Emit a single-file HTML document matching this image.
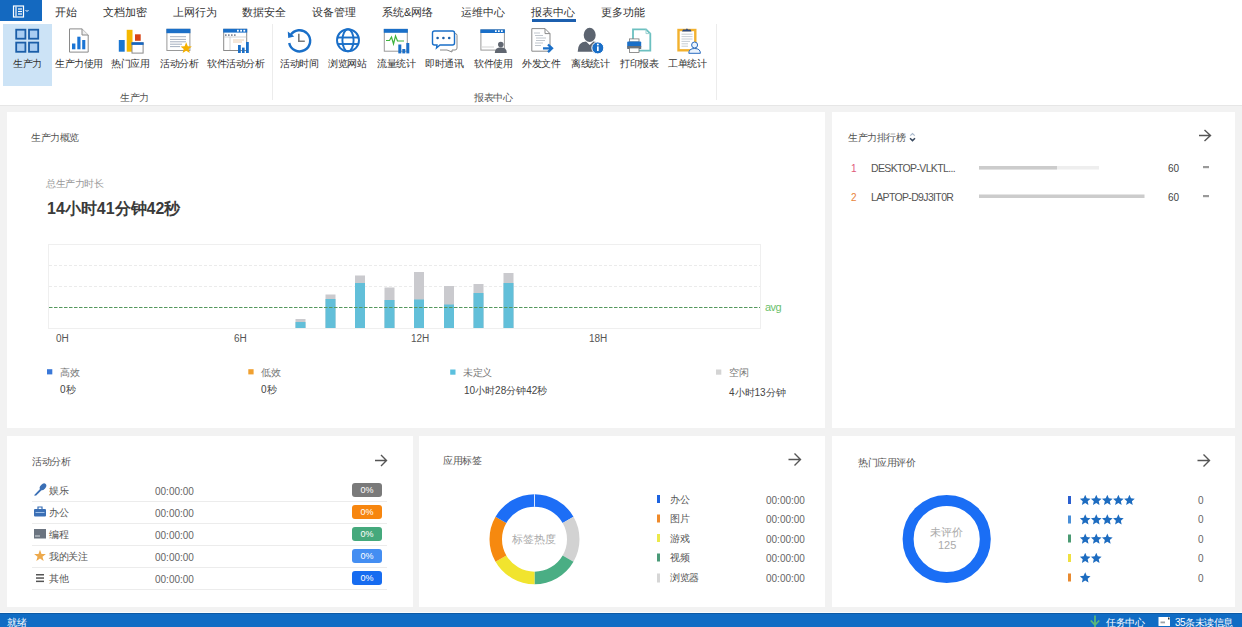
<!DOCTYPE html>
<html><head><meta charset="utf-8">
<style>
*{margin:0;padding:0;box-sizing:border-box}
html,body{width:1242px;height:627px;overflow:hidden;background:#f2f2f2;font-family:"Liberation Sans",sans-serif;color:#333}
.t{position:absolute;white-space:nowrap;line-height:1}
.f10{font-size:10px;letter-spacing:-0.5px}
.rl{font-size:10px;letter-spacing:-0.4px}
.n{font-size:10px}
.f11{font-size:11px}
svg{position:absolute;left:0;top:0}
</style></head><body>
<!-- ribbon bg -->
<div class="t" style="left:0;top:0;width:1242px;height:105px;background:#fff"></div>
<div class="t" style="left:0;top:105px;width:1242px;height:1px;background:#e6e6e6"></div>
<div class="t" style="left:0;top:0;width:42px;height:21px;background:#1469c0"></div>
<div class="t" style="left:3px;top:24px;width:49px;height:62px;background:#cce3f6"></div>
<div class="t" style="left:272px;top:24px;width:1px;height:76px;background:#ececec"></div>
<div class="t" style="left:716px;top:24px;width:1px;height:76px;background:#ececec"></div>
<div class="t" style="left:532px;top:19.3px;width:44px;height:2.6px;background:#1c5fae"></div>

<!-- tabs -->
<div class="t f11" style="left:55px;top:7px">开始</div>
<div class="t f11" style="left:103px;top:7px">文档加密</div>
<div class="t f11" style="left:173px;top:7px">上网行为</div>
<div class="t f11" style="left:242px;top:7px">数据安全</div>
<div class="t f11" style="left:312px;top:7px">设备管理</div>
<div class="t f11" style="left:382px;top:7px">系统&amp;网络</div>
<div class="t f11" style="left:461px;top:7px">运维中心</div>
<div class="t f11" style="left:531px;top:7px">报表中心</div>
<div class="t f11" style="left:601px;top:7px">更多功能</div>

<!-- ribbon labels -->
<div class="t rl" style="left:13px;top:59px">生产力</div>
<div class="t rl" style="left:55px;top:59px">生产力使用</div>
<div class="t rl" style="left:111px;top:59px">热门应用</div>
<div class="t rl" style="left:160px;top:59px">活动分析</div>
<div class="t rl" style="left:207px;top:59px">软件活动分析</div>
<div class="t rl" style="left:280px;top:59px">活动时间</div>
<div class="t rl" style="left:328px;top:59px">浏览网站</div>
<div class="t rl" style="left:377px;top:59px">流量统计</div>
<div class="t rl" style="left:425px;top:59px">即时通讯</div>
<div class="t rl" style="left:474px;top:59px">软件使用</div>
<div class="t rl" style="left:522px;top:59px">外发文件</div>
<div class="t rl" style="left:571px;top:59px">离线统计</div>
<div class="t rl" style="left:620px;top:59px">打印报表</div>
<div class="t rl" style="left:668px;top:59px">工单统计</div>
<div class="t f10" style="left:120px;top:93px;color:#555">生产力</div>
<div class="t f10" style="left:474px;top:93px;color:#555">报表中心</div>

<!-- panels -->
<div class="t" style="left:7px;top:112px;width:818px;height:316px;background:#fff"></div>
<div class="t" style="left:832px;top:112px;width:403px;height:316px;background:#fff"></div>
<div class="t" style="left:7px;top:436px;width:406px;height:171px;background:#fff"></div>
<div class="t" style="left:419px;top:436px;width:406px;height:171px;background:#fff"></div>
<div class="t" style="left:832px;top:436px;width:403px;height:171px;background:#fff"></div>

<!-- status -->
<div class="t" style="left:0;top:612px;width:1242px;height:1px;background:#fafcfe"></div>
<div class="t" style="left:0;top:613px;width:1242px;height:14px;background:#106cc4;border-top:1px solid #0d5aa5"></div>

<!-- main panel -->
<div class="t f10" style="left:31px;top:133px;color:#555">生产力概览</div>
<div class="t f10" style="left:46px;top:179px;color:#999">总生产力时长</div>
<div class="t" style="left:47px;top:201px;font-size:16px;font-weight:bold;color:#3a3a3a">14小时41分钟42秒</div>
<svg width="1242" height="627" style="left:0;top:0">
  <rect x="48.5" y="244.5" width="712" height="84" fill="none" stroke="#efefef" stroke-width="1"/>
  <line x1="49" y1="265.5" x2="760" y2="265.5" stroke="#ebebeb" stroke-dasharray="3,2"/>
  <line x1="49" y1="286.5" x2="760" y2="286.5" stroke="#ebebeb" stroke-dasharray="3,2"/>
  <g fill="#cacace">
    <rect x="295.5" y="319" width="10" height="9"/>
    <rect x="325.5" y="294.5" width="10" height="33.5"/>
    <rect x="355" y="275.5" width="10" height="52.5"/>
    <rect x="384.5" y="287.5" width="10" height="40.5"/>
    <rect x="414" y="272" width="10" height="56"/>
    <rect x="444" y="286" width="10" height="42"/>
    <rect x="473.5" y="284" width="10" height="44"/>
    <rect x="503.5" y="273" width="10" height="55"/>
  </g>
  <g fill="#62bfd9">
    <rect x="295.5" y="322" width="10" height="6"/>
    <rect x="325.5" y="299" width="10" height="29"/>
    <rect x="355" y="283" width="10" height="45"/>
    <rect x="384.5" y="300" width="10" height="28"/>
    <rect x="414" y="299.5" width="10" height="28.5"/>
    <rect x="444" y="304.5" width="10" height="23.5"/>
    <rect x="473.5" y="293" width="10" height="35"/>
    <rect x="503.5" y="283" width="10" height="45"/>
  </g>
  <line x1="49" y1="307.5" x2="760" y2="307.5" stroke="#55985e" stroke-width="1" stroke-dasharray="3.5,1.5"/>
  <g fill="#3a78d8"><rect x="47" y="369.2" width="5.3" height="5.2"/></g>
  <g fill="#f0a030"><rect x="248.3" y="369.2" width="5.3" height="5.2"/></g>
  <g fill="#5bc0de"><rect x="450.2" y="369.5" width="5.3" height="5.2"/></g>
  <g fill="#d4d4d4"><rect x="716" y="369.5" width="5.3" height="5.2"/></g>
</svg>
<div class="t f10" style="left:765px;top:302px;color:#6cbf6c;font-size:11px">avg</div>
<div class="t n" style="left:56px;top:334px;color:#555">0H</div>
<div class="t n" style="left:234px;top:334px;color:#555">6H</div>
<div class="t n" style="left:411px;top:334px;color:#555">12H</div>
<div class="t n" style="left:589px;top:334px;color:#555">18H</div>
<div class="t f10" style="left:60px;top:368px;color:#777">高效</div>
<div class="t f10" style="left:261px;top:368px;color:#777">低效</div>
<div class="t f10" style="left:463px;top:368px;color:#777">未定义</div>
<div class="t f10" style="left:729px;top:368px;color:#777">空闲</div>
<div class="t n" style="left:60px;top:385px;color:#444">0秒</div>
<div class="t n" style="left:261px;top:385px;color:#444">0秒</div>
<div class="t n" style="left:464px;top:386px;color:#444">10小时28分钟42秒</div>
<div class="t n" style="left:729px;top:388px;color:#444">4小时13分钟</div>

<!-- ranking -->
<div class="t f10" style="left:848px;top:133px;color:#555">生产力排行榜</div>
<div class="t" style="left:851px;top:164px;font-size:10px;color:#e05a7a">1</div>
<div class="t" style="left:851px;top:193px;font-size:10px;color:#e8843a">2</div>
<div class="t" style="left:871px;top:163px;font-size:10.5px;letter-spacing:-0.65px;color:#555">DESKTOP-VLKTL...</div>
<div class="t" style="left:871px;top:192px;font-size:10.5px;letter-spacing:-0.65px;color:#555">LAPTOP-D9J3IT0R</div>
<div class="t n" style="left:1168px;top:164px;color:#444">60</div>
<div class="t n" style="left:1168px;top:193px;color:#444">60</div>
<svg width="1242" height="627">
  <path d="M910.3 135.6 L912.5 133.6 L914.7 135.6" fill="none" stroke="#a8b8cc" stroke-width="1.1"/><path d="M910 138.2 L912.5 140.6 L915 138.2" fill="none" stroke="#3a4a60" stroke-width="1.5"/>
  <rect x="979" y="166" width="120" height="3.5" fill="#eeeeee"/>
  <rect x="979" y="166" width="78" height="3.5" fill="#cccccc"/>
  <rect x="979" y="194.5" width="165.5" height="3.5" fill="#cccccc"/>
  <rect x="1203" y="166" width="6" height="2.2" fill="#999"/>
  <rect x="1203" y="195" width="6" height="2.2" fill="#999"/>
  <g fill="none" stroke="#555" stroke-width="1.4">
    <path d="M1199 135.5 H1210.5 M1204.5 130 L1210.5 135.5 L1204.5 141"/>
    <path d="M375 460.5 H386.5 M381 455 L386.5 460.5 L381 466"/>
    <path d="M788.5 459.5 H800.5 M794.5 453.5 L800.5 459.5 L794.5 465.5"/>
    <path d="M1197.5 460.5 H1209.5 M1203.5 454.5 L1209.5 460.5 L1203.5 466.5"/>
  </g>
</svg>


<!-- activity -->
<div class="t f10" style="left:32px;top:457px;color:#555">活动分析</div>
<div class="t f10" style="left:49px;top:486px;color:#555">娱乐</div>
<div class="t f10" style="left:49px;top:508px;color:#555">办公</div>
<div class="t f10" style="left:49px;top:530px;color:#555">编程</div>
<div class="t f10" style="left:49px;top:552px;color:#555">我的关注</div>
<div class="t f10" style="left:49px;top:574px;color:#555">其他</div>
<div class="t n" style="left:155px;top:487px;color:#666">00:00:00</div>
<div class="t n" style="left:155px;top:509px;color:#666">00:00:00</div>
<div class="t n" style="left:155px;top:531px;color:#666">00:00:00</div>
<div class="t n" style="left:155px;top:553px;color:#666">00:00:00</div>
<div class="t n" style="left:155px;top:575px;color:#666">00:00:00</div>
<div class="t" style="left:352px;top:483px;width:30px;height:14px;border-radius:3px;background:#7a7a7a"></div>
<div class="t" style="left:352px;top:505px;width:30px;height:14px;border-radius:3px;background:#f7860f"></div>
<div class="t" style="left:352px;top:527px;width:30px;height:14px;border-radius:3px;background:#45a97c"></div>
<div class="t" style="left:352px;top:549px;width:30px;height:14px;border-radius:3px;background:#448ef2"></div>
<div class="t" style="left:352px;top:571px;width:30px;height:14px;border-radius:3px;background:#176cf0"></div>
<div class="t" style="left:352px;top:486px;width:30px;font-size:9px;color:#fff;text-align:center">0%</div>
<div class="t" style="left:352px;top:508px;width:30px;font-size:9px;color:#fff;text-align:center">0%</div>
<div class="t" style="left:352px;top:530px;width:30px;font-size:9px;color:#fff;text-align:center">0%</div>
<div class="t" style="left:352px;top:552px;width:30px;font-size:9px;color:#fff;text-align:center">0%</div>
<div class="t" style="left:352px;top:574px;width:30px;font-size:9px;color:#fff;text-align:center">0%</div>
<svg width="1242" height="627">
  <g fill="#ececec">
    <rect x="32" y="501" width="355" height="1"/>
    <rect x="32" y="523" width="355" height="1"/>
    <rect x="32" y="545" width="355" height="1"/>
    <rect x="32" y="567" width="355" height="1"/>
    <rect x="32" y="589" width="355" height="1"/>
  </g>
  <path d="M34.2 495.8 L35 494.2 L40.5 488.6 L41.8 489.9 L36.2 495.4 Z" fill="#3a6fb5"/>
  <ellipse cx="43" cy="486.8" rx="2.6" ry="3.8" transform="rotate(45 43 486.8)" fill="#3a6fb5"/>
  <rect x="34" y="509" width="12" height="7.5" rx="1" fill="#3a6fb5"/>
  <path d="M38 509 V507 H42 V509" fill="none" stroke="#3a6fb5" stroke-width="1.2"/>
  <rect x="35.5" y="512" width="9" height="1" fill="#9fc0e8"/>
  <rect x="34" y="529" width="12" height="9.5" fill="#6b7480"/>
  <rect x="35" y="535" width="5" height="2" fill="#a0a8b0"/>
  <path d="M40.00,549.80 L41.53,553.89 L45.90,554.08 L42.48,556.80 L43.64,561.02 L40.00,558.60 L36.36,561.02 L37.52,556.80 L34.10,554.08 L38.47,553.89Z" fill="#eda94c"/>
  <g fill="#555"><rect x="36" y="574" width="8" height="1.5"/><rect x="36" y="577.3" width="8" height="1.5"/><rect x="36" y="580.6" width="8" height="1.5"/></g>
</svg>

<!-- app tags -->
<div class="t f10" style="left:443px;top:456px;color:#555">应用标签</div>
<svg width="1242" height="627">
<path d="M534.50 494.20 A45 45 0 0 1 573.47 516.70 L562.65 522.95 A32.5 32.5 0 0 0 534.50 506.70Z" fill="#1d6ef6"/>
<path d="M573.47 516.70 A45 45 0 0 1 573.47 561.70 L562.65 555.45 A32.5 32.5 0 0 0 562.65 522.95Z" fill="#d2d2d2"/>
<path d="M573.47 561.70 A45 45 0 0 1 534.50 584.20 L534.50 571.70 A32.5 32.5 0 0 0 562.65 555.45Z" fill="#4aae84"/>
<path d="M534.50 584.20 A45 45 0 0 1 495.53 561.70 L506.35 555.45 A32.5 32.5 0 0 0 534.50 571.70Z" fill="#f1e42e"/>
<path d="M495.53 561.70 A45 45 0 0 1 495.53 516.70 L506.35 522.95 A32.5 32.5 0 0 0 506.35 555.45Z" fill="#f6890f"/>
<path d="M495.53 516.70 A45 45 0 0 1 534.50 494.20 L534.50 506.70 A32.5 32.5 0 0 0 506.35 522.95Z" fill="#1d6ef6"/>
<line x1="534.5" y1="494.20000000000005" x2="534.5" y2="506.70000000000005" stroke="#fff" stroke-width="0.8"/>
  <g>
    <rect x="657" y="495" width="3" height="8" fill="#1d63e0"/>
    <rect x="657" y="514.5" width="3" height="8" fill="#ef8a2a"/>
    <rect x="657" y="534" width="3" height="8" fill="#ece94a"/>
    <rect x="657" y="553.5" width="3" height="8" fill="#4a9a78"/>
    <rect x="657" y="573.5" width="3" height="9" fill="#d6d6d6"/>
  </g>
</svg>
<div class="t" style="left:512px;top:534px;font-size:11px;color:#aaa">标签热度</div>
<div class="t f10" style="left:670px;top:495px;color:#555">办公</div>
<div class="t f10" style="left:670px;top:514px;color:#555">图片</div>
<div class="t f10" style="left:670px;top:534px;color:#555">游戏</div>
<div class="t f10" style="left:670px;top:553px;color:#555">视频</div>
<div class="t f10" style="left:670px;top:573px;color:#555">浏览器</div>
<div class="t n" style="left:766px;top:496px;color:#666">00:00:00</div>
<div class="t n" style="left:766px;top:515px;color:#666">00:00:00</div>
<div class="t n" style="left:766px;top:535px;color:#666">00:00:00</div>
<div class="t n" style="left:766px;top:554px;color:#666">00:00:00</div>
<div class="t n" style="left:766px;top:574px;color:#666">00:00:00</div>

<!-- rating -->
<div class="t f10" style="left:858px;top:458px;color:#555">热门应用评价</div>
<svg width="1242" height="627">
  <circle cx="946.7" cy="539" r="38.6" fill="none" stroke="#1a6ef5" stroke-width="11"/>
  <rect x="1068" y="496" width="3" height="8" fill="#2a5fd0"/>
  <rect x="1068" y="515.5" width="3" height="8" fill="#4a8fd8"/>
  <rect x="1068" y="534.5" width="3" height="8" fill="#4a9a72"/>
  <rect x="1068" y="554" width="3" height="8" fill="#f0e040"/>
  <rect x="1068" y="573.5" width="3" height="8" fill="#e88a30"/>
<path d="M1085.20,494.80 L1086.73,498.30 L1090.53,498.67 L1087.67,501.20 L1088.49,504.93 L1085.20,503.00 L1081.91,504.93 L1082.73,501.20 L1079.87,498.67 L1083.67,498.30Z M1096.26,494.80 L1097.79,498.30 L1101.59,498.67 L1098.73,501.20 L1099.55,504.93 L1096.26,503.00 L1092.97,504.93 L1093.79,501.20 L1090.93,498.67 L1094.73,498.30Z M1107.32,494.80 L1108.85,498.30 L1112.65,498.67 L1109.79,501.20 L1110.61,504.93 L1107.32,503.00 L1104.03,504.93 L1104.85,501.20 L1101.99,498.67 L1105.79,498.30Z M1118.38,494.80 L1119.91,498.30 L1123.71,498.67 L1120.85,501.20 L1121.67,504.93 L1118.38,503.00 L1115.09,504.93 L1115.91,501.20 L1113.05,498.67 L1116.85,498.30Z M1129.44,494.80 L1130.97,498.30 L1134.77,498.67 L1131.91,501.20 L1132.73,504.93 L1129.44,503.00 L1126.15,504.93 L1126.97,501.20 L1124.11,498.67 L1127.91,498.30Z M1085.20,514.30 L1086.73,517.80 L1090.53,518.17 L1087.67,520.70 L1088.49,524.43 L1085.20,522.50 L1081.91,524.43 L1082.73,520.70 L1079.87,518.17 L1083.67,517.80Z M1096.26,514.30 L1097.79,517.80 L1101.59,518.17 L1098.73,520.70 L1099.55,524.43 L1096.26,522.50 L1092.97,524.43 L1093.79,520.70 L1090.93,518.17 L1094.73,517.80Z M1107.32,514.30 L1108.85,517.80 L1112.65,518.17 L1109.79,520.70 L1110.61,524.43 L1107.32,522.50 L1104.03,524.43 L1104.85,520.70 L1101.99,518.17 L1105.79,517.80Z M1118.38,514.30 L1119.91,517.80 L1123.71,518.17 L1120.85,520.70 L1121.67,524.43 L1118.38,522.50 L1115.09,524.43 L1115.91,520.70 L1113.05,518.17 L1116.85,517.80Z M1085.20,533.60 L1086.73,537.10 L1090.53,537.47 L1087.67,540.00 L1088.49,543.73 L1085.20,541.80 L1081.91,543.73 L1082.73,540.00 L1079.87,537.47 L1083.67,537.10Z M1096.26,533.60 L1097.79,537.10 L1101.59,537.47 L1098.73,540.00 L1099.55,543.73 L1096.26,541.80 L1092.97,543.73 L1093.79,540.00 L1090.93,537.47 L1094.73,537.10Z M1107.32,533.60 L1108.85,537.10 L1112.65,537.47 L1109.79,540.00 L1110.61,543.73 L1107.32,541.80 L1104.03,543.73 L1104.85,540.00 L1101.99,537.47 L1105.79,537.10Z M1085.20,552.80 L1086.73,556.30 L1090.53,556.67 L1087.67,559.20 L1088.49,562.93 L1085.20,561.00 L1081.91,562.93 L1082.73,559.20 L1079.87,556.67 L1083.67,556.30Z M1096.26,552.80 L1097.79,556.30 L1101.59,556.67 L1098.73,559.20 L1099.55,562.93 L1096.26,561.00 L1092.97,562.93 L1093.79,559.20 L1090.93,556.67 L1094.73,556.30Z M1085.20,572.30 L1086.73,575.80 L1090.53,576.17 L1087.67,578.70 L1088.49,582.43 L1085.20,580.50 L1081.91,582.43 L1082.73,578.70 L1079.87,576.17 L1083.67,575.80Z" fill="#1d6cc0"/>
</svg>
<div class="t" style="left:930px;top:527px;font-size:11px;color:#aaa">未评价</div>
<div class="t" style="left:938px;top:540px;font-size:11px;color:#aaa">125</div>
<div class="t n" style="left:1198px;top:496px;color:#666">0</div>
<div class="t n" style="left:1198px;top:515px;color:#666">0</div>
<div class="t n" style="left:1198px;top:535px;color:#666">0</div>
<div class="t n" style="left:1198px;top:554px;color:#666">0</div>
<div class="t n" style="left:1198px;top:574px;color:#666">0</div>

<!-- status text -->
<div class="t f10" style="left:7px;top:618px;color:#fff">就绪</div>
<div class="t f10" style="left:1106px;top:618px;color:#fff">任务中心</div>
<div class="t f10" style="left:1175px;top:618px;color:#fff">35条未读信息</div>
<svg width="1242" height="627">
  <path d="M1095 615.5 V627 M1090.8 620.5 L1095 625 L1099.2 620.5" fill="none" stroke="#5ab878" stroke-width="1.8"/>
  <rect x="1158.5" y="617" width="11.5" height="9" fill="#fff"/>
  <rect x="1160.5" y="621.5" width="4.5" height="1.8" fill="#a0a4a8"/><rect x="1168" y="617.5" width="1.5" height="2" fill="#333"/>
</svg>


<!-- ribbon icons -->
<svg width="1242" height="104">
  <!-- file button icon -->
  <g fill="none" stroke="#fff" stroke-width="1.2">
    <rect x="13.5" y="6" width="10" height="11"/>
    <line x1="16" y1="6.5" x2="16" y2="16.5"/>
    <line x1="18" y1="9" x2="22" y2="9"/><line x1="18" y1="11.5" x2="22" y2="11.5"/><line x1="18" y1="14" x2="22" y2="14"/>
    <path d="M25.5 10 L27 11.5 L28.5 10" stroke-width="1"/>
  </g>
  <!-- 1 grid -->
  <g fill="#a9cdf2" stroke="#1b5ea8" stroke-width="1.8">
    <rect x="16.2" y="29.7" width="9.2" height="9"/>
    <rect x="29" y="29.7" width="9.2" height="9"/>
    <rect x="16.2" y="42.6" width="9.2" height="9.2"/>
    <rect x="29" y="42.6" width="9.2" height="9.2"/>
  </g>
  <!-- 2 doc chart -->
  <path d="M69.5 28.9 H82 L88.2 35 V52.1 H69.5 Z" fill="#fff" stroke="#8a8a8a" stroke-width="1"/>
  <path d="M82 28.9 V35 H88.2" fill="#eee" stroke="#8a8a8a" stroke-width="1"/>
  <g fill="#1a74d4"><rect x="72" y="43.5" width="3.4" height="5.8"/><rect x="77.3" y="36.7" width="3.2" height="12.6"/><rect x="82.2" y="40" width="3.1" height="9.3"/></g>
  <!-- 3 hot apps -->
  <rect x="118.8" y="40" width="5.9" height="11.7" fill="#1976d2"/>
  <rect x="126.7" y="29.8" width="5.8" height="21.9" fill="#f5b800"/>
  <rect x="135" y="34.3" width="5.7" height="6.5" fill="#d84315"/>
  <rect x="132" y="42.8" width="11.1" height="10.3" fill="#fff" stroke="#8a8a8a" stroke-width="1"/>
  <rect x="131.5" y="42.3" width="12.1" height="2.6" fill="#1565c0"/>
  <!-- 4 activity analysis -->
  <rect x="166.9" y="29.3" width="23" height="21.2" fill="#fff" stroke="#999" stroke-width="1"/>
  <rect x="166.4" y="28.8" width="24" height="4.4" fill="#1a6fc8"/>
  <g stroke="#9aa6b8" stroke-width="0.9"><line x1="170" y1="36.7" x2="186" y2="36.7"/><line x1="170" y1="39.4" x2="186" y2="39.4"/><line x1="170" y1="41.8" x2="186" y2="41.8"/><line x1="170" y1="44.2" x2="182" y2="44.2"/><line x1="170" y1="46.6" x2="180" y2="46.6"/></g>
  <path d="M186.2,42.3 L187.8,46.2 L191.9,46.4 L188.7,49 L189.8,53 L186.2,50.7 L182.6,53 L183.7,49 L180.5,46.4 L184.6,46.2Z" fill="#f5b000"/>
  <!-- 5 software activity analysis -->
  <rect x="223.7" y="29.3" width="23" height="21.2" fill="#fff" stroke="#8a8a8a" stroke-width="1"/>
  <rect x="223.2" y="28.8" width="24" height="3.8" fill="#1a6fc8"/>
  <g fill="#fff"><rect x="237" y="29.8" width="1.8" height="1.8"/><rect x="240.2" y="29.8" width="1.8" height="1.8"/><rect x="243.4" y="29.8" width="1.8" height="1.8"/></g>
  <g fill="#7a8090"><rect x="225" y="34.3" width="1.6" height="1.6"/><rect x="228" y="34.3" width="1.6" height="1.6"/><rect x="231" y="34.3" width="1.6" height="1.6"/><rect x="234" y="34.3" width="1.6" height="1.6"/></g>
  <line x1="224" y1="37" x2="246.5" y2="37" stroke="#c8c8c8" stroke-width="0.8"/>
  <line x1="230" y1="37" x2="230" y2="50" stroke="#c8c8c8" stroke-width="0.8"/>
  <g stroke="#e8c8a8" stroke-width="0.9"><line x1="233" y1="40" x2="244" y2="40"/><line x1="233" y1="42" x2="242" y2="42"/></g>
  <g fill="#1a6fc8"><rect x="238" y="45" width="2.8" height="8"/><rect x="242" y="47.6" width="2.6" height="5.4"/><rect x="246" y="42" width="2.8" height="11"/></g>
  <!-- 6 activity time -->
  <path d="M290.4 35.5 A10.6 10.6 0 1 1 289.2 43" fill="none" stroke="#1a6fc8" stroke-width="2.4"/>
  <path d="M287.8 31.5 L288.2 38 L294.3 36.6 Z" fill="#1a6fc8"/>
  <path d="M298.8 33.8 V41.3 H304.8" fill="none" stroke="#7a7a7a" stroke-width="1.6"/>
  <!-- 7 globe -->
  <g fill="none" stroke="#1a6fc8" stroke-width="1.9">
    <circle cx="348" cy="40.3" r="11"/>
    <ellipse cx="348" cy="40.3" rx="5.6" ry="11"/>
    <line x1="337.5" y1="37.5" x2="358.5" y2="37.5"/>
    <line x1="337.5" y1="44" x2="358.5" y2="44"/>
  </g>
  <!-- 8 traffic -->
  <rect x="384.3" y="29.4" width="23" height="21.8" fill="#fff" stroke="#999" stroke-width="1"/>
  <rect x="383.8" y="28.9" width="24" height="3.9" fill="#1a6fc8"/>
  <path d="M386 40.5 H389.5 L391.5 37 L393.5 44 L395.5 36 L397.5 41 H404" fill="none" stroke="#3db33d" stroke-width="1.2"/>
  <g fill="#1a6fc8"><rect x="398.3" y="44.5" width="3" height="8.9"/><rect x="402.3" y="49" width="3" height="4.4"/><rect x="406.3" y="43" width="3" height="10.4"/></g>
  <!-- 9 chat -->
  <path d="M437 33.5 H455 Q457 33.5 457 35.5 V48 Q457 50 455 50 H452 L452 52 L447 50 H440" fill="#fff" stroke="#8a8a8a" stroke-width="1"/>
  <path d="M434.5 31 H452.5 Q454.5 31 454.5 33 V43 Q454.5 45 452.5 45 H440 L436.5 48 L437 45 H434.5 Q432.5 45 432.5 43 V33 Q432.5 31 434.5 31 Z" fill="#fff" stroke="#1a6fc8" stroke-width="1.4"/>
  <g fill="#1a5fa8"><circle cx="437.6" cy="38" r="1.3"/><circle cx="443.4" cy="38" r="1.3"/><circle cx="449.2" cy="38" r="1.3"/></g>
  <!-- 10 software use -->
  <rect x="480.9" y="29.9" width="23.5" height="20.2" fill="#fff" stroke="#999" stroke-width="1"/>
  <rect x="480.4" y="29.4" width="24.5" height="3.6" fill="#1a6fc8"/>
  <g fill="#fff"><rect x="495" y="30.3" width="1.7" height="1.7"/><rect x="498" y="30.3" width="1.7" height="1.7"/><rect x="501" y="30.3" width="1.7" height="1.7"/></g>
  <line x1="482" y1="47" x2="494" y2="47" stroke="#c8c8c8" stroke-width="0.8"/>
  <circle cx="500.8" cy="44.6" r="2.8" fill="#606670"/>
  <path d="M494.8 53 Q494.8 47.6 500.8 47.6 Q506.8 47.6 506.8 53 Z" fill="#606670"/>
  <!-- 11 send file -->
  <path d="M531.8 28.6 H545 L550 33.6 V51.2 H531.8 Z" fill="#fff" stroke="#8a8a8a" stroke-width="1"/>
  <path d="M545 28.6 V33.6 H550" fill="none" stroke="#8a8a8a" stroke-width="1"/>
  <g stroke="#b0b8c0" stroke-width="0.8"><line x1="534" y1="33" x2="540" y2="33"/><line x1="535" y1="35.5" x2="543" y2="35.5"/><line x1="536" y1="38" x2="546" y2="38"/><line x1="536" y1="40.5" x2="545" y2="40.5"/><line x1="535" y1="43" x2="543" y2="43"/><line x1="535" y1="45.5" x2="541" y2="45.5"/></g>
  <path d="M543 48.3 H551.5 M548 44.5 L552 48.3 L548 52.1" fill="none" stroke="#1a6fc8" stroke-width="2.3"/>
  <!-- 12 offline -->
  <ellipse cx="589.7" cy="34.9" rx="6" ry="7.1" fill="#5c6470"/>
  <path d="M577.7 51.7 Q577.7 42 586 41.5 L589.7 45 L593.5 41.5 Q600 42 600.5 47 L596 51.7 Z" fill="#5c6470"/>
  <circle cx="597.8" cy="47.9" r="6" fill="#1a6fc8" stroke="#fff" stroke-width="1"/>
  <rect x="597" y="46.4" width="1.7" height="4.6" fill="#fff"/><circle cx="597.85" cy="44.6" r="1" fill="#fff"/>
  <!-- 13 print -->
  <path d="M633 29.3 H646 L650.3 33.6 V50.6 H633 Z" fill="#fff" stroke="#6cc0c0" stroke-width="1.8"/>
  <path d="M646 29.3 V33.6 H650.3" fill="none" stroke="#9ad0d0" stroke-width="1"/>
  <rect x="629.5" y="38.9" width="9.5" height="3" fill="#fff" stroke="#777" stroke-width="0.8"/>
  <rect x="627.2" y="41.5" width="14" height="6.5" rx="1" fill="#1a6fc8"/>
  <rect x="627.2" y="46" width="14" height="3" fill="#6a7078"/>
  <rect x="629.5" y="48" width="9.5" height="4.4" fill="#fff" stroke="#777" stroke-width="0.8"/>
  <!-- 14 work order -->
  <rect x="678.5" y="30" width="16.8" height="20.3" fill="#fff" stroke="#f2b12e" stroke-width="2.4"/>
  <path d="M682 31.5 L683 29.5 H686 Q686.8 27.5 688 29.5 H690.5 L691.5 31.5 Z" fill="#2c4a80"/>
  <g stroke="#b8c0c8" stroke-width="0.8"><line x1="681.5" y1="34.2" x2="692.5" y2="34.2"/><line x1="681.5" y1="36.6" x2="692.5" y2="36.6"/><line x1="681.5" y1="39" x2="692.5" y2="39"/><line x1="681.5" y1="41.4" x2="690" y2="41.4"/><line x1="681.5" y1="43.8" x2="688" y2="43.8"/><line x1="681.5" y1="46.2" x2="688" y2="46.2"/></g>
  <circle cx="694.6" cy="45" r="3" fill="#eaf3fc" stroke="#2a6cc0" stroke-width="1"/>
  <path d="M688.8 53.3 Q688.8 48.5 694.6 48.5 Q700.4 48.5 700.4 53.3 Z" fill="#eaf3fc" stroke="#2a6cc0" stroke-width="1"/>
</svg>

<!--CONTENT-->
</body></html>
